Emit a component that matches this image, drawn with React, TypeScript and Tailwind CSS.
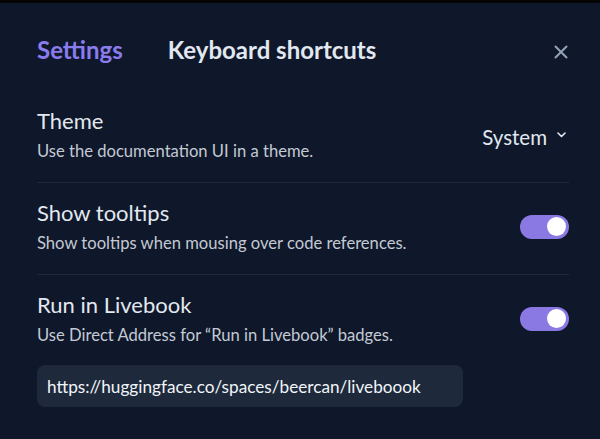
import React, { useState } from "react";

const Toggle = ({ on, onChange }: { on: boolean; onChange: () => void }) => {
  return (
    <button
      type="button"
      onClick={onChange}
      className={`relative flex items-center w-[49px] h-6 rounded-full shrink-0 ${
        on ? "bg-[#8b79e3]" : "bg-slate-600"
      }`}
    >
      <span
        className={`absolute w-[19px] h-[19px] rounded-full bg-white ${
          on ? "right-[3px]" : "left-[3px]"
        }`}
      />
    </button>
  );
};

const SettingRow = ({
  title,
  description,
  children,
  bordered,
}: {
  title: string;
  description: string;
  children: React.ReactNode;
  bordered?: boolean;
}) => {
  return (
    <div
      className={`flex items-center justify-between pt-4 pb-5 ${
        bordered ? "border-b border-[#1e293b]" : ""
      }`}
    >
      <div>
        <p className="text-[22px] leading-7 text-[#e2e8f0]">{title}</p>
        <p className="mt-[5px] text-[16.6px] leading-[22px] text-[#c3cad4]">
          {description}
        </p>
      </div>
      {children}
    </div>
  );
};

const App = () => {
  const [tooltips, setTooltips] = useState(true);
  const [livebook, setLivebook] = useState(true);

  return (
    <div
      className="w-[600px] h-[439px] bg-[#0f172a] border-t-[3px] border-[#050505] overflow-hidden"
      style={{ fontFamily: "Lato, 'Noto Sans', sans-serif" }}
    >
      <div className="pl-[37px] pr-[31px]">
        <div className="flex items-center justify-between pt-[31px] pb-[25px]">
          <div className="flex items-center gap-[45px] text-[24px] leading-8 font-bold">
            <span className="text-[#8b7cee]">Settings</span>
            <span className="text-[#e2e8f0]">Keyboard shortcuts</span>
          </div>
          <button type="button" className="mt-[3px] mr-[1px] text-[#94a3b8]">
            <svg
              width="14"
              height="14"
              viewBox="0 0 14 14"
              fill="none"
              stroke="currentColor"
              strokeWidth="2"
              strokeLinecap="round"
            >
              <path d="M1.5 1.5l11 11M12.5 1.5l-11 11" />
            </svg>
          </button>
        </div>

        <SettingRow
          title="Theme"
          description="Use the documentation UI in a theme."
          bordered
        >
          <button
            type="button"
            className="mt-[5px] flex items-center gap-[10px] text-[20.5px] leading-7 text-[#e2e8f0] mr-[3px]"
          >
            System
            <svg
              width="9"
              height="6"
              viewBox="0 0 9 6"
              fill="none"
              stroke="currentColor"
              strokeWidth="1.6"
              strokeLinecap="round"
              strokeLinejoin="round"
              className="-mt-1"
            >
              <path d="M1 1l3.5 3.5L8 1" />
            </svg>
          </button>
        </SettingRow>

        <SettingRow
          title="Show tooltips"
          description="Show tooltips when mousing over code references."
          bordered
        >
          <Toggle on={tooltips} onChange={() => setTooltips(!tooltips)} />
        </SettingRow>

        <SettingRow
          title="Run in Livebook"
          description="Use Direct Address for “Run in Livebook” badges."
        >
          <Toggle on={livebook} onChange={() => setLivebook(!livebook)} />
        </SettingRow>

        <input
          type="text"
          defaultValue="https://huggingface.co/spaces/beercan/liveboook"
          className="-mt-[1px] w-[426px] h-[42px] rounded-lg bg-[#1e293b] px-[10px] text-[17.2px] text-[#f1f5f9] outline-none"
        />
      </div>
    </div>
  );
};

export default App;
